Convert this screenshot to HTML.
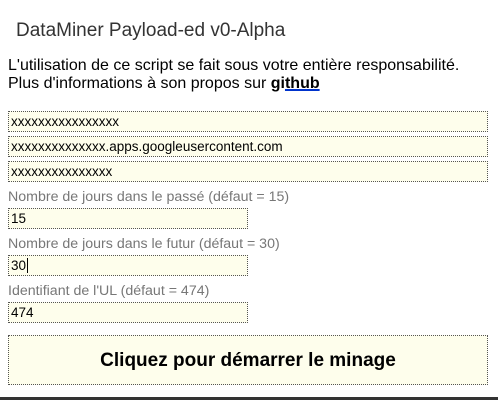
<!DOCTYPE html>
<html><head><meta charset="utf-8"><style>
*{margin:0;padding:0;box-sizing:border-box}
body{width:498px;height:400px;background:#fff;font-family:"Liberation Sans",Arial,sans-serif;position:relative;overflow:hidden}
.a{position:absolute;white-space:nowrap}
.in{position:absolute;left:8px;border:1px dotted #555;background:#fefeec;font-size:13.5px;color:#000;padding-left:2px;line-height:19px}
.lb{position:absolute;left:8px;font-size:14.2px;color:#777;white-space:nowrap}
</style></head><body>
<div class="a" style="left:16px;top:20px;font-size:19px;color:#333">DataMiner Payload-ed v0-Alpha</div>
<div class="a" style="left:8px;top:57px;font-size:16px;color:#000;line-height:18px">L'utilisation de ce script se fait sous votre entière responsabilité.<br>Plus d'informations à son propos sur <b>gi<span style="text-decoration:underline;text-decoration-color:#0033cc;text-decoration-thickness:2px;text-underline-offset:1px">thub</span></b></div>
<div class="in" style="top:111px;width:480px;height:21px">xxxxxxxxxxxxxxxx</div>
<div class="in" style="top:136px;width:480px;height:21px">xxxxxxxxxxxxxx.apps.googleusercontent.com</div>
<div class="in" style="top:161px;width:480px;height:21px">xxxxxxxxxxxxxxx</div>
<div class="lb" style="top:189px">Nombre de jours dans le passé (défaut = 15)</div>
<div class="in" style="top:208px;width:240px;height:21px">15</div>
<div class="lb" style="top:236px">Nombre de jours dans le futur (défaut = 30)</div>
<div class="in" style="top:255px;width:240px;height:21px">30<span style="border-left:1px solid #000;margin-left:1px"></span></div>
<div class="lb" style="top:283px">Identifiant de l'UL (défaut = 474)</div>
<div class="in" style="top:302px;width:240px;height:21px">474</div>
<div class="a" style="left:8px;top:335px;width:480px;height:50px;border:1px dotted #555;background:#fefeec;font-size:19px;font-weight:bold;text-align:center;line-height:50px">Cliquez pour démarrer le minage</div>
<div class="a" style="left:0;top:397px;width:498px;height:3px;background:#333"></div>
</body></html>
